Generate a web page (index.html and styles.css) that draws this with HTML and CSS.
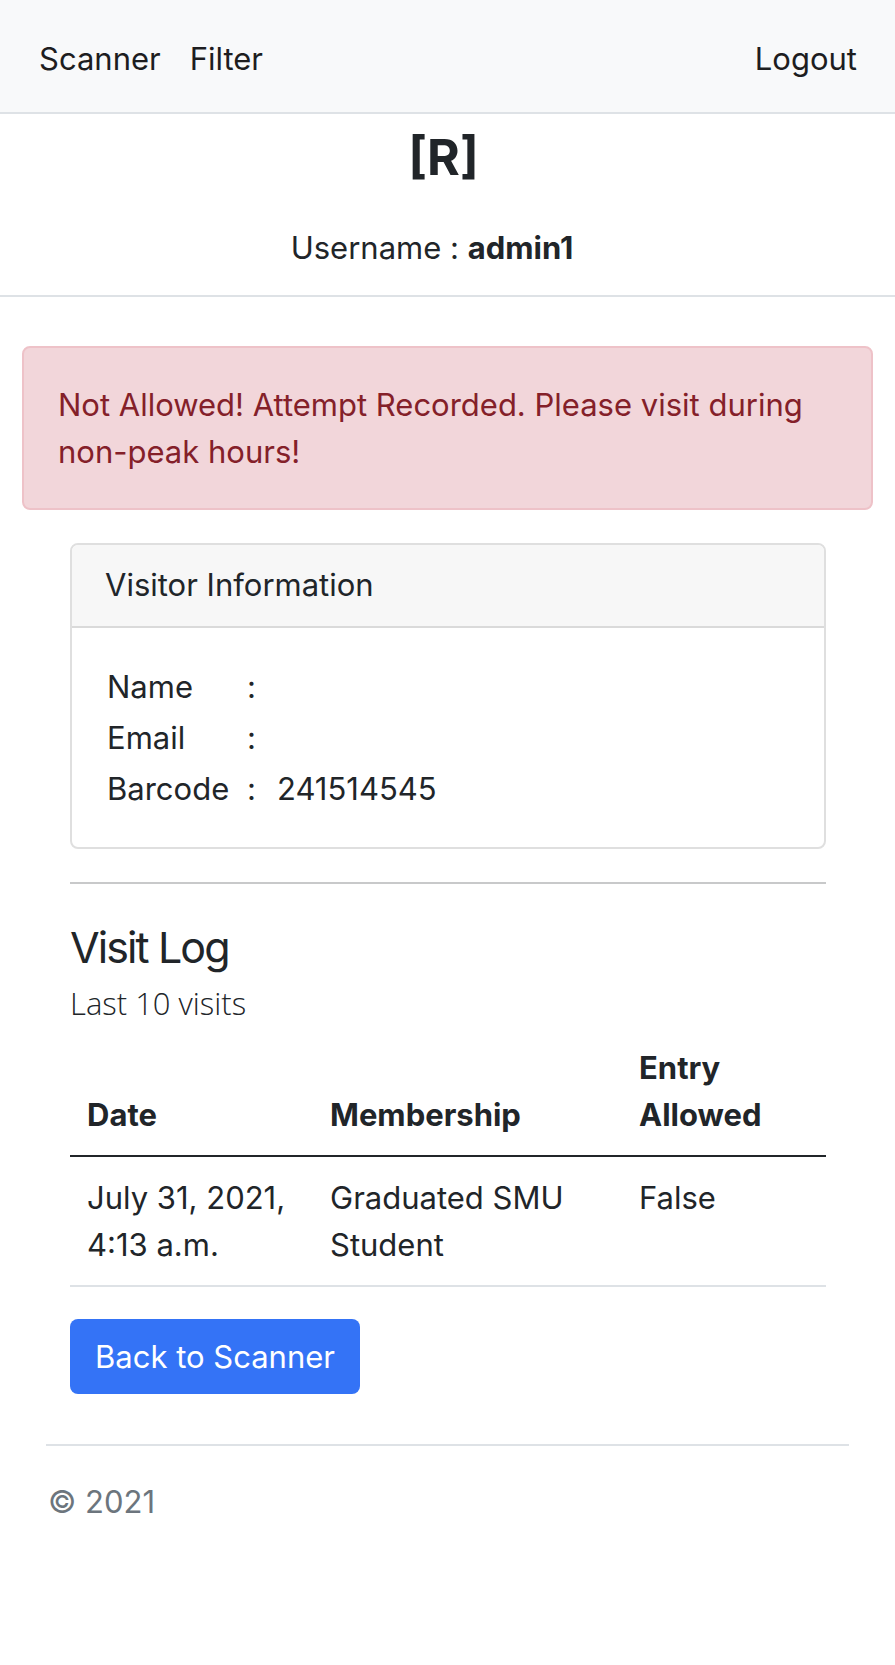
FILE: index.html
```html
<!DOCTYPE html>
<html lang="en">
<head>
<meta charset="utf-8">
<title>Visitor</title>
<link rel="stylesheet" href="styles.css">
</head>
<body>
<nav class="navbar">
  <div class="nav-left">
    <a class="nav-link" href="#">Scanner</a>
    <a class="nav-link" href="#">Filter</a>
  </div>
  <a class="nav-link" href="#">Logout</a>
</nav>
<header class="page-head">
  <h3 class="brand">[R]</h3>
  <p class="user">Username : <b>admin1</b></p>
</header>
<hr class="rule-full">
<main class="container">
  <div class="alert">Not Allowed! Attempt Recorded. Please visit during non-peak hours!</div>
  <section class="inner">
    <div class="card">
      <div class="card-header">Visitor Information</div>
      <div class="card-body">
        <div class="info-row"><span class="info-label">Name</span><span class="info-colon">:</span><span class="info-value"></span></div>
        <div class="info-row"><span class="info-label">Email</span><span class="info-colon">:</span><span class="info-value"></span></div>
        <div class="info-row"><span class="info-label">Barcode</span><span class="info-colon">:</span><span class="info-value">241514545</span></div>
      </div>
    </div>
    <hr class="rule-inner">
    <h4 class="log-title">Visit Log</h4>
    <p class="lead">Last 10 visits</p>
    <table class="log-table">
      <colgroup><col class="c-date"><col class="c-mem"><col class="c-entry"></colgroup>
      <thead>
        <tr><th>Date</th><th>Membership</th><th>Entry Allowed</th></tr>
      </thead>
      <tbody>
        <tr><td>July 31, 2021, 4:13 a.m.</td><td>Graduated SMU Student</td><td>False</td></tr>
      </tbody>
    </table>
    <a class="btn" href="#">Back to Scanner</a>
  </section>
  <footer class="footer">
    <p>© 2021</p>
  </footer>
</main>
</body>
</html>
```
FILE: styles.css
```css
* { box-sizing: border-box; }
html, body { margin: 0; padding: 0; }
body {
  font-family: Inter, "Noto Sans", "Liberation Sans", sans-serif;
  font-size: 31px;
  line-height: 47px;
  color: #212529;
  background: #fff;
}
a { text-decoration: none; }

.navbar {
  display: flex;
  justify-content: space-between;
  align-items: center;
  height: 114px;
  padding: 4px 38px 0 39px;
  background: #f8f9fa;
  border-bottom: 2px solid #dee2e6;
}
.nav-left { display: flex; gap: 29px; }
.nav-link { color: #1d1d1f; }

.page-head { text-align: center; }
.brand {
  margin: 13px 0 0;
  padding-right: 8px;
  font-size: 50px;
  line-height: 60px;
  font-weight: 700;
}
.user { margin: 37px 0 0; padding-right: 31px; }
.user b { font-weight: 700; }

.rule-full {
  margin: 24px 0 0;
  border: 0;
  border-top: 2px solid #dee2e6;
}

.container { padding: 49px 22px 0; }

.alert {
  padding: 33px 34px 33px;
  background: #f2d6da;
  border: 2px solid #eec2c8;
  border-radius: 8px;
  color: #842029;
}

.inner { margin: 33px 47px 0 48px; }

.card {
  border: 2px solid #dfdfdf;
  border-radius: 8px;
  overflow: hidden;
}
.card-header {
  height: 83px;
  padding: 16px 33px 0;
  background: #f7f7f7;
  border-bottom: 2px solid #dadada;
}
.card-body { padding: 33px 33px 33px 35px; }
.info-row { display: flex; line-height: 51px; }
.info-label { width: 140px; }
.info-colon { width: 30px; }

.rule-inner {
  margin: 33px 0 0;
  border: 0;
  border-top: 2px solid #c8c9ca;
}

.log-title {
  margin: 38px 0 0;
  font-size: 43px;
  line-height: 50px;
  font-weight: 400;
  letter-spacing: -1.9px;
}
.lead {
  margin: 8px 0 0;
  font-family: "Open Sans", Inter, sans-serif;
  font-size: 31px;
  font-weight: 300;
}

.log-table {
  width: 100%;
  border-collapse: collapse;
  table-layout: fixed;
}
.c-date { width: 243px; }
.c-mem { width: 309px; }
th, td {
  padding: 17px 17px;
  text-align: left;
}
th {
  vertical-align: bottom;
  font-weight: 700;
  border-bottom: 2px solid #212529;
}
td {
  vertical-align: top;
  border-bottom: 2px solid #dee2e6;
}

.btn {
  display: inline-block;
  margin-top: 32px;
  padding: 14px 25px;
  background: #3473f6;
  color: #fff;
  border-radius: 8px;
}

.footer {
  margin: 50px 24px 0;
  border-top: 2px solid #dee2e6;
}
.footer p {
  margin: 32px 0 0 2px;
  color: #6c757d;
}
```
